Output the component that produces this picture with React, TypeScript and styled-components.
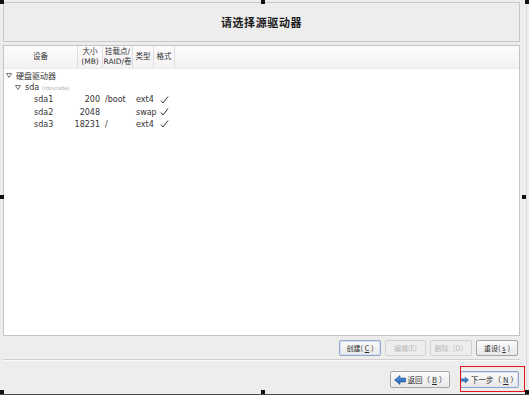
import React from "react";
import styled, { createGlobalStyle } from "styled-components";

const GlobalStyle = createGlobalStyle`
  html, body {
    margin: 0;
    padding: 0;
    background: #ededed;
  }
  body {
    font-family: "DejaVu Sans", "Noto Sans CJK SC", sans-serif;
    font-size: 8px;
    color: #222;
  }
`;

const Screen = styled.div`
  position: relative;
  width: 529px;
  height: 395px;
  box-sizing: border-box;
  background: #ededed;
  border-bottom: 1px solid #4a4a4a;
  overflow: hidden;
`;

const Window = styled.div`
  display: flex;
  flex-direction: column;
  height: 394px;
  box-sizing: border-box;
  padding: 2px 6px 0 3px;
  border-right: 1px solid #e4dbe0;
  width: 527px;
`;

const TitlePanel = styled.div`
  height: 40px;
  box-sizing: border-box;
  border: 1px solid #c9c9c9;
  display: flex;
  align-items: center;
  justify-content: center;
  font-family: "Noto Sans CJK SC", sans-serif;
  font-weight: bold;
  font-size: 11px;
  color: #1a1a1a;
  letter-spacing: 0.6px;
`;

const TablePanel = styled.div`
  margin-top: 3px;
  height: 291px;
  box-sizing: border-box;
  border: 1px solid #c4c4c4;
  background: #fff;
  display: flex;
  flex-direction: column;
`;

const HeaderRow = styled.div`
  display: grid;
  grid-template-columns: 74px 25px 30px 21px 21px 1fr;
  height: 23px;
  box-sizing: border-box;
  background: linear-gradient(#fdfbfc, #f3f1f2);
  border-bottom: 1px solid #ececec;
`;

const HeadCell = styled.div<{ $last?: boolean }>`
  display: flex;
  align-items: center;
  justify-content: center;
  text-align: center;
  line-height: 10px;
  font-size: 7.5px;
  color: #333;
  border-right: ${(p) => (p.$last ? "none" : "1px solid #dedede")};
`;

const Body = styled.div`
  display: flex;
  flex-direction: column;
`;

const Row = styled.div`
  display: grid;
  grid-template-columns: 74px 25px 30px 21px 21px;
  height: 12.3px;
  align-items: center;
  color: #333;
`;

const TreeLabel = styled.div<{ $indent: number }>`
  display: flex;
  align-items: center;
  gap: 4px;
  padding-left: ${(p) => p.$indent}px;
  white-space: nowrap;
`;

const Dim = styled.span`
  color: #b0b0b0;
  font-size: 5.5px;
`;

const SizeCell = styled.div`
  display: flex;
  justify-content: flex-end;
  white-space: nowrap;
  padding-right: 3px;
`;

const MountCell = styled.div`
  padding-left: 2px;
`;

const TypeCell = styled.div`
  padding-left: 3px;
`;

const CheckCell = styled.div`
  display: flex;
  padding-left: 6px;
`;

const ActionBar = styled.div`
  display: flex;
  justify-content: flex-end;
  gap: 4px;
  padding: 4px 2px 0 0;
`;

const Button = styled.button<{ $w: number; $focus?: boolean }>`
  width: ${(p) => p.$w}px;
  height: 16px;
  padding: 0;
  box-sizing: border-box;
  display: flex;
  align-items: center;
  justify-content: center;
  gap: 2px;
  white-space: nowrap;
  font-family: "Noto Sans CJK SC", sans-serif;
  font-size: 7px;
  color: ${(p) => (p.disabled ? "#b8b8b8" : "#2a2a2a")};
  border: 1px solid ${(p) => (p.$focus ? "#8fa6c6" : p.disabled ? "#d0d0d0" : "#a6a6a6")};
  border-radius: 2px;
  background: ${(p) =>
    p.disabled ? "#ededed" : "linear-gradient(#fbfbfb, #e8e8e8)"};
  box-shadow: ${(p) => (p.$focus ? "inset 0 0 0 1px #d6e2f1" : "none")};
`;

const Separator = styled.div`
  margin-top: 3px;
  border-top: 1px solid #cfcfcf;
  border-bottom: 1px solid #fafafa;
`;

const NavBar = styled.div`
  display: flex;
  justify-content: flex-end;
  gap: 10px;
  padding: 10px 1px 0 0;
`;

const NavButton = styled(Button)`
  height: 17px;
  font-size: 7.5px;
`;

const Highlight = styled.div`
  position: absolute;
  left: 460px;
  top: 366px;
  width: 65px;
  height: 26px;
  box-sizing: border-box;
  border: 1px solid #e4141b;
`;

const Handle = styled.div`
  position: absolute;
  width: 4px;
  height: 4px;
  background: #111;
`;

const Underline = styled.span`
  text-decoration: underline;
`;

const Triangle = () => (
  <svg width="6" height="5" viewBox="0 0 6 5">
    <path d="M0.5 0.5 H5.5 L3 4.5 Z" fill="none" stroke="#555" strokeWidth="0.8" />
  </svg>
);

const Check = () => (
  <svg width="9" height="8" viewBox="0 0 9 8">
    <path d="M1 4.5 L3 7 L8 0.5" fill="none" stroke="#333" strokeWidth="1" />
  </svg>
);

const Arrow = ({ dir }: { dir: "left" | "right" }) => (
  <svg width="12" height="10" viewBox="0 0 12 10">
    <defs>
      <linearGradient id={`ag-${dir}`} x1="0" y1="0" x2="0" y2="1">
        <stop offset="0" stopColor="#5b9ae0" />
        <stop offset="1" stopColor="#1f5fae" />
      </linearGradient>
    </defs>
    <path
      d={dir === "right" ? "M0.5 3 H6 V0.5 L11.5 5 L6 9.5 V7 H0.5 Z" : "M11.5 3 H6 V0.5 L0.5 5 L6 9.5 V7 H11.5 Z"}
      fill={`url(#ag-${dir})`}
      stroke="#1d4f8f"
      strokeWidth="0.6"
    />
  </svg>
);

const parts = [
  { name: "sda1", size: "200", mount: "/boot", type: "ext4" },
  { name: "sda2", size: "2048", mount: "", type: "swap" },
  { name: "sda3", size: "18231", mount: "/", type: "ext4" },
];

const handles = [
  [0, 0], [261, 0], [525, 0],
  [0, 195], [522, 195],
  [0, 390], [261, 390], [525, 390],
];

export default function App() {
  return (
    <Screen>
      <GlobalStyle />
      <Window>
        <TitlePanel>请选择源驱动器</TitlePanel>
        <TablePanel>
          <HeaderRow>
            <HeadCell>设备</HeadCell>
            <HeadCell>大小<br />(MB)</HeadCell>
            <HeadCell>挂载点/<br />RAID/卷</HeadCell>
            <HeadCell>类型</HeadCell>
            <HeadCell>格式</HeadCell>
            <HeadCell $last />
          </HeaderRow>
          <Body>
            <Row>
              <TreeLabel $indent={2}>
                <Triangle />
                <span>硬盘驱动器</span>
              </TreeLabel>
            </Row>
            <Row>
              <TreeLabel $indent={11}>
                <Triangle />
                <span>sda <Dim>(/dev/sda)</Dim></span>
              </TreeLabel>
            </Row>
            {parts.map((p) => (
              <Row key={p.name}>
                <TreeLabel $indent={30}>{p.name}</TreeLabel>
                <SizeCell>{p.size}</SizeCell>
                <MountCell>{p.mount}</MountCell>
                <TypeCell>{p.type}</TypeCell>
                <CheckCell><Check /></CheckCell>
              </Row>
            ))}
          </Body>
        </TablePanel>
        <ActionBar>
          <Button $w={42} $focus>创建(<Underline>C</Underline>)</Button>
          <Button $w={41} disabled>编辑(E)</Button>
          <Button $w={42} disabled>删除（D）</Button>
          <Button $w={42}>重设(<Underline>s</Underline>)</Button>
        </ActionBar>
        <Separator />
        <NavBar>
          <NavButton $w={60}><Arrow dir="left" />返回（<Underline>B</Underline>）</NavButton>
          <NavButton $w={59} $focus><Arrow dir="right" />下一步（<Underline>N</Underline>）</NavButton>
        </NavBar>
      </Window>
      <Highlight />
      {handles.map(([x, y]) => (
        <Handle key={`${x}-${y}`} style={{ left: x, top: y }} />
      ))}
    </Screen>
  );
}
